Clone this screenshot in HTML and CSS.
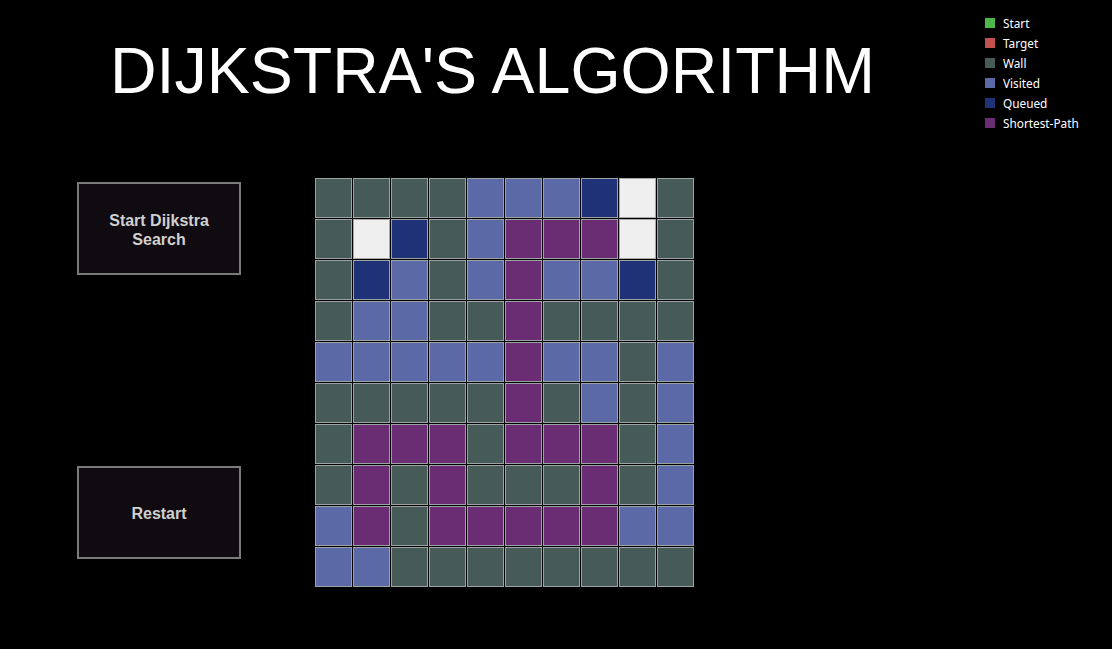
FILE: index.html
```html
<!DOCTYPE html>
<html>
<head>
<meta charset="utf-8">
<link rel="stylesheet" href="styles.css">
</head>
<body>
<div class="page">
  <header class="header">
    <h1 class="title">DIJKSTRA'S ALGORITHM</h1>
    <ul class="legend">
      <li><span class="swatch start"></span>Start</li>
      <li><span class="swatch target"></span>Target</li>
      <li><span class="swatch wall"></span>Wall</li>
      <li><span class="swatch visited"></span>Visited</li>
      <li><span class="swatch queued"></span>Queued</li>
      <li><span class="swatch path"></span>Shortest-Path</li>
    </ul>
  </header>
  <main class="content">
    <div class="controls">
      <button class="btn">Start Dijkstra<br>Search</button>
      <button class="btn">Restart</button>
    </div>
    <div class="grid">
      <div class="cell w"></div><div class="cell w"></div><div class="cell w"></div><div class="cell w"></div><div class="cell v"></div><div class="cell v"></div><div class="cell v"></div><div class="cell q"></div><div class="cell e"></div><div class="cell w"></div>
      <div class="cell w"></div><div class="cell e"></div><div class="cell q"></div><div class="cell w"></div><div class="cell v"></div><div class="cell p"></div><div class="cell p"></div><div class="cell p"></div><div class="cell e"></div><div class="cell w"></div>
      <div class="cell w"></div><div class="cell q"></div><div class="cell v"></div><div class="cell w"></div><div class="cell v"></div><div class="cell p"></div><div class="cell v"></div><div class="cell v"></div><div class="cell q"></div><div class="cell w"></div>
      <div class="cell w"></div><div class="cell v"></div><div class="cell v"></div><div class="cell w"></div><div class="cell w"></div><div class="cell p"></div><div class="cell w"></div><div class="cell w"></div><div class="cell w"></div><div class="cell w"></div>
      <div class="cell v"></div><div class="cell v"></div><div class="cell v"></div><div class="cell v"></div><div class="cell v"></div><div class="cell p"></div><div class="cell v"></div><div class="cell v"></div><div class="cell w"></div><div class="cell v"></div>
      <div class="cell w"></div><div class="cell w"></div><div class="cell w"></div><div class="cell w"></div><div class="cell w"></div><div class="cell p"></div><div class="cell w"></div><div class="cell v"></div><div class="cell w"></div><div class="cell v"></div>
      <div class="cell w"></div><div class="cell p"></div><div class="cell p"></div><div class="cell p"></div><div class="cell w"></div><div class="cell p"></div><div class="cell p"></div><div class="cell p"></div><div class="cell w"></div><div class="cell v"></div>
      <div class="cell w"></div><div class="cell p"></div><div class="cell w"></div><div class="cell p"></div><div class="cell w"></div><div class="cell w"></div><div class="cell w"></div><div class="cell p"></div><div class="cell w"></div><div class="cell v"></div>
      <div class="cell v"></div><div class="cell p"></div><div class="cell w"></div><div class="cell p"></div><div class="cell p"></div><div class="cell p"></div><div class="cell p"></div><div class="cell p"></div><div class="cell v"></div><div class="cell v"></div>
      <div class="cell v"></div><div class="cell v"></div><div class="cell w"></div><div class="cell w"></div><div class="cell w"></div><div class="cell w"></div><div class="cell w"></div><div class="cell w"></div><div class="cell w"></div><div class="cell w"></div>
    </div>
  </main>
</div>
</body>
</html>
```

FILE: styles.css
```css
html, body {
  margin: 0;
  padding: 0;
  background: #000;
}
.page {
  width: 1112px;
  height: 649px;
  overflow: hidden;
  background: #000;
}
.header {
  display: flex;
  align-items: flex-start;
}
.title {
  margin: 39px 0 0 110px;
  font-family: "Liberation Sans", Arial, sans-serif;
  font-weight: normal;
  font-size: 64.5px;
  line-height: 64px;
  color: #fff;
  white-space: nowrap;
}
.legend {
  list-style: none;
  margin: 13px 0 0 auto;
  padding: 0;
  width: 127px;
  font-family: "Noto Sans", "Open Sans", sans-serif;
  font-size: 11.8px;
  color: #fff;
}
.legend li {
  display: flex;
  align-items: center;
  height: 20px;
}
.swatch {
  width: 10px;
  height: 10px;
  margin-right: 8px;
}
.swatch.start { background: #4cb84c; }
.swatch.target { background: #c44f4f; }
.swatch.wall { background: #465a58; }
.swatch.visited { background: #5b6aa6; }
.swatch.queued { background: #1f3278; }
.swatch.path { background: #6a2d74; }

.content {
  display: flex;
  align-items: flex-start;
  margin-top: 45px;
  padding-left: 77px;
}
.controls {
  display: flex;
  flex-direction: column;
  gap: 191px;
  margin-top: 4px;
  margin-right: 74px;
}
.btn {
  width: 164px;
  height: 93px;
  box-sizing: border-box;
  border: 2px solid #7a7a7a;
  background: #100b10;
  color: #d0d0d0;
  font-family: "Liberation Sans", Arial, sans-serif;
  font-weight: bold;
  font-size: 16px;
  line-height: 19px;
  padding: 2px 0 0;
}
.grid {
  display: grid;
  grid-template-columns: repeat(10, 37px);
  grid-auto-rows: 40px;
  gap: 1px;
}
.cell {
  box-sizing: border-box;
  border: 1px solid #9aa2a2;
}
.cell.w { background: #465a58; }
.cell.v { background: #5b6aa6; }
.cell.q { background: #1f3278; }
.cell.p { background: #6a2d74; }
.cell.e { background: #efefef; border-color: #a8a8a8; }
```
